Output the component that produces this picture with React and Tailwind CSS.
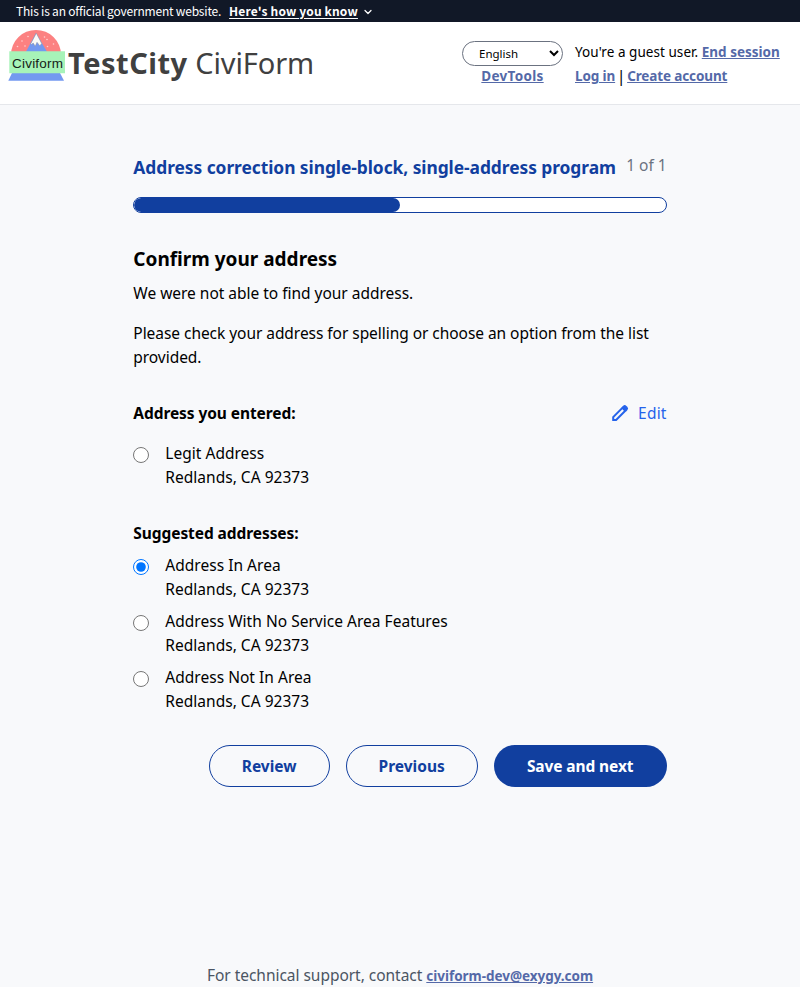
import React, { useState } from 'react';
import { ChevronDown } from 'lucide-react';

const LINK = 'font-bold text-[#5469a8] underline underline-offset-1';

function Logo() {
  return (
    <svg width="60" height="60" viewBox="0 0 60 60" className="shrink-0">
      <path d="M3 24.500a25 24.500 0 0 1 50 0z" fill="#fc8181" />
      <path d="M17 23.500l11-20.500 12 20.500z" fill="#7399f0" />
      <path d="M28.300 3.200l5.400 10.300-1.900 2.300-2.800-3.500-1.800 4-2-3.300-1.800 1.500-.6-.8z" fill="#fbfbf8" stroke="#8a8f9c" strokeWidth=".5" />
      <g fill="#ffd0d0">
        <circle cx="9.500" cy="16.500" r=".8" /><circle cx="14" cy="11" r=".8" /><circle cx="17" cy="16" r=".8" />
        <circle cx="20" cy="6.500" r=".8" /><circle cx="36.500" cy="7" r=".8" /><circle cx="39.500" cy="16.500" r=".8" />
        <circle cx="45.500" cy="14" r=".8" /><circle cx="39" cy="9.500" r=".8" />
      </g>
      <path d="M4 43h48l4 7.800H0.300z" fill="#7399f0" />
      <path d="M1.300 21.300H57v22H1.300z" fill="#a7f3b8" />
      <text x="4" y="38" textLength="51" fontSize="13.500" fontFamily="Liberation Sans, sans-serif" fill="#161d18">Civiform</text>
    </svg>
  );
}

function Address({ line, checked, onChange }) {
  return (
    <label className="flex h-12 items-start">
      <input type="radio" name="address" checked={checked} onChange={onChange} className="mt-1.5 mr-4 size-4 shrink-0" />
      <span className="tracking-[0.02px]">
        <span className="block">{line}</span>
        <span className="block">Redlands, CA 92373</span>
      </span>
    </label>
  );
}

export default function App() {
  const [picked, setPicked] = useState(1);
  const suggestions = ['Address In Area', 'Address With No Service Area Features', 'Address Not In Area'];
  return (
    <div className="flex h-[987px] flex-col overflow-hidden bg-[#f8f9fb] font-['Noto_Sans',sans-serif] text-[15.500px] leading-6 text-black">
      <div className="flex h-[22px] shrink-0 items-center bg-[#111827] pl-4 font-['Noto_Sans_CJK_SC',sans-serif] text-[12px] leading-[22px] text-white">
        <span className="tracking-[-0.2px]">This is an official government website.</span>
        <span className="ml-2 font-bold tracking-[0.15px] underline underline-offset-2">Here's how you know</span>
        <ChevronDown className="mt-0.5 ml-1 size-3" strokeWidth={2.5} />
      </div>
      <header className="flex h-[83px] shrink-0 items-start border-b border-[#e5e7eb] bg-white pl-2">
        <div className="flex pt-2">
          <Logo />
          <div className="mt-[15px] text-[29px] leading-9 whitespace-nowrap text-[#404040]">
            <span className="font-bold tracking-[0.5px]">TestCity</span> <span className="tracking-[-0.1px]">CiviForm</span>
          </div>
        </div>
        <div className="mt-[19px] ml-auto flex w-[101px] flex-col items-center">
          <select className="h-[25px] w-[101px] rounded-full border border-[#6b7280] bg-white px-3 text-[11.500px] leading-4">
            <option>English</option>
          </select>
          <a className={`${LINK} text-[13.500px] leading-5 tracking-[0.3px]`}>DevTools</a>
        </div>
        <div className="mt-[18px] ml-3 w-[225px] text-[13.500px] leading-6 whitespace-nowrap">
          <div className="tracking-[0.05px]">You're a guest user. <a className={`${LINK} tracking-normal`}>End session</a></div>
          <div className="flex tracking-[-0.12px]">
            <a className={LINK}>Log in</a>
            <span className="w-[12px] text-center text-[16px]">|</span>
            <a className={LINK}>Create account</a>
          </div>
        </div>
      </header>
      <main className="mx-auto flex w-2/3 flex-col">
        <div className="mt-12 flex h-8 justify-between whitespace-nowrap">
          <h1 className="pt-0.5 text-[17.400px] font-bold tracking-[-0.06px] text-[#113f9f]">Address correction single-block, single-address program</h1>
          <span className="text-[#6b7280]">1 of 1</span>
        </div>
        <div className="mt-3 h-4 overflow-hidden rounded-full border border-[#113f9f] bg-white">
          <div className="h-full w-1/2 rounded-full bg-[#113f9f]" />
        </div>
        <h2 className="mt-8 text-[19px] leading-7 font-bold">Confirm your address</h2>
        <p className="mt-2 tracking-[-0.02px]">We were not able to find your address.</p>
        <p className="mt-4 tracking-[-0.05px]">Please check your address for spelling or choose an option from the list<br />provided.</p>
        <div className="mt-8 flex justify-between">
          <h3 className="font-bold tracking-[-0.08px]">Address you entered:</h3>
          <a className="flex items-center tracking-[0.2px] text-[#2563eb]">
            <svg className="mr-2 size-5" viewBox="0 0 20 20">
              <path d="M3.200 17v-2.900L12.400 4.900l2.900 2.900L6.100 17z" fill="none" stroke="currentColor" strokeWidth="2" />
              <path d="M11.700 4.200l1.300-1.300a2.400 2.400 0 0 1 3.400 0l.9.9a2.400 2.400 0 0 1 0 3.400L16 8.500z" fill="currentColor" />
            </svg>
            Edit
          </a>
        </div>
        <div className="mt-4"><Address line="Legit Address" checked={picked === 0} onChange={() => setPicked(0)} /></div>
        <h3 className="mt-8 font-bold tracking-[-0.08px]">Suggested addresses:</h3>
        <div className="mt-2 flex flex-col gap-2">
          {suggestions.map((s, i) => (
            <Address key={s} line={s} checked={picked === i + 1} onChange={() => setPicked(i + 1)} />
          ))}
        </div>
        <div className="mt-8 flex justify-end gap-4 font-bold whitespace-nowrap">
          <button className="h-[42px] w-[121px] rounded-full border border-[#113f9f] text-[#113f9f]">Review</button>
          <button className="h-[42px] w-[132px] rounded-full border border-[#113f9f] text-[#113f9f]">Previous</button>
          <button className="h-[42px] w-[173px] rounded-full bg-[#113f9f] tracking-[-0.1px] text-white">Save and next</button>
        </div>
      </main>
      <footer className="mt-auto -mb-px text-center tracking-[-0.03px] whitespace-nowrap text-[#4b5563]">
        For technical support, contact <a className={`${LINK} text-[13.500px]`}>civiform-dev@exygy.com</a>
      </footer>
    </div>
  );
}
